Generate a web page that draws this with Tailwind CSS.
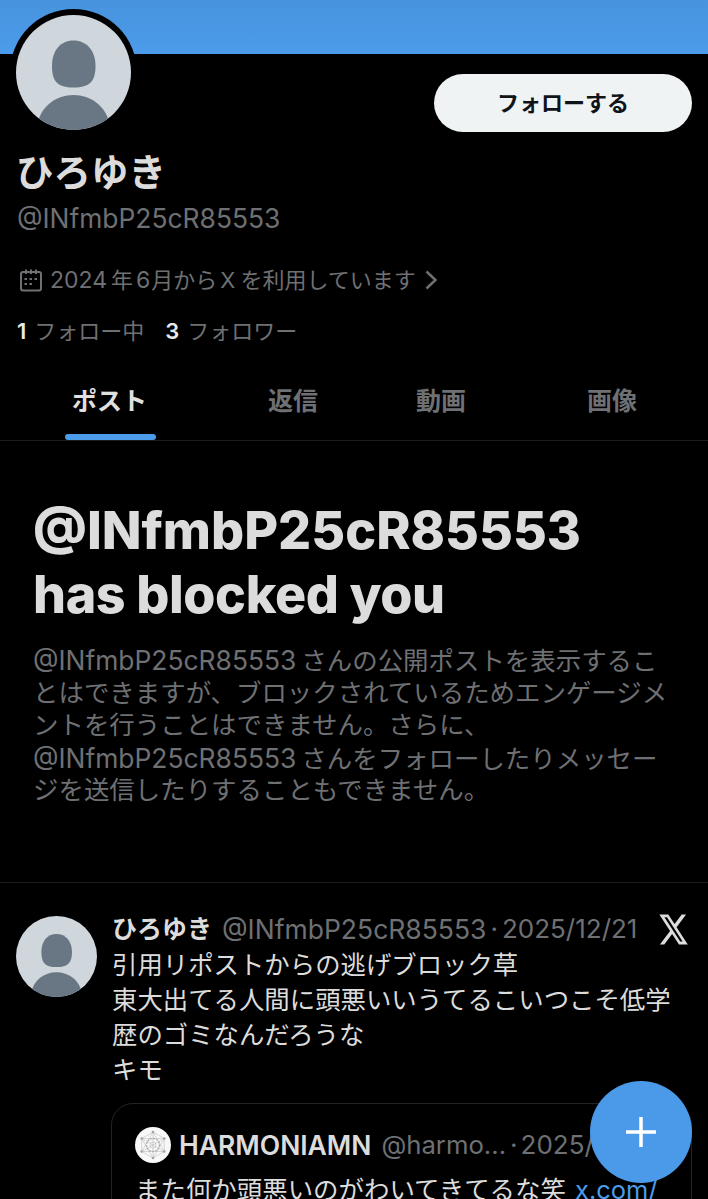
<!DOCTYPE html>
<html lang="ja">
  <head>
    <meta charset="UTF-8" />
    <meta name="viewport" content="width=device-width, initial-scale=1.0" />
    <title>ひろゆき</title>
    <script src="https://cdn.jsdelivr.net/npm/@tailwindcss/browser@4"></script>
  </head>
  <body class="bg-black">
    <div
      class="relative flex h-[1199px] w-[708px] flex-col overflow-hidden bg-black font-['Inter','Noto_Sans_CJK_JP',sans-serif] whitespace-nowrap text-[#dcdcdc]"
    >
      <!-- Banner -->
      <div class="h-[54px] shrink-0 bg-gradient-to-b from-[#4793dd] to-[#4b9ceb]"></div>

      <!-- Profile header -->
      <header class="flex h-[387px] shrink-0 flex-col border-b border-[#1c1c1e]">
        <div class="flex h-[83px] items-start justify-between pr-4 pl-[10px]">
          <div class="-mt-[45px] rounded-full bg-black p-[6px]">
            <svg class="h-[115px] w-[115px] rounded-full" viewBox="0 0 115 115">
              <rect width="115" height="115" fill="#cfd6dc" />
              <path d="M57.500 25.500C71 25.500 79.500 36 79.500 51C79.500 66 74 72.500 57.500 72.500C41 72.500 36 66 36 51C36 36 44 25.500 57.500 25.500Z" fill="#697784" />
              <path d="M21 110C25 91 40 80 57.500 80C75 80 90 91 94 110V115H21Z" fill="#697784" />
            </svg>
          </div>
          <button
            type="button"
            class="mt-5 h-[58px] w-[258px] rounded-full bg-[#eff3f4] text-[22px] leading-[58px] font-bold text-[#0f1419]"
          >
            フォローする
          </button>
        </div>
        <h1 class="mt-[13px] pl-4 text-[37.500px] leading-[45px] font-bold">ひろゆき</h1>
        <p class="pl-[17px] text-[26.400px] leading-[46px] text-[#6e7073]">@INfmbP25cR85553</p>
        <div class="mt-4 flex h-[46px] items-center pl-5 text-[22px] leading-[46px] text-[#6e7073]">
          <svg class="mr-2 h-[23px] w-[22px]" viewBox="0 0 22 23" fill="none" stroke="currentColor">
            <rect x="1" y="3" width="20" height="18.500" rx="2" stroke-width="2" />
            <path d="M6 0.500V5M11 0.500V5M16 0.500V5" stroke-width="2" />
            <path d="M9.500 10h2.500M14.500 10h2.500M4.500 10h2.500M4.500 15h2.500M9.500 15h2.500" stroke-width="2.200" />
          </svg>
          <span class="text-[23px]">2024</span>
          <span class="ml-1">年</span>
          <span class="ml-[3px] text-[23px]">6</span>
          <span class="ml-px">月から</span>
          <span class="ml-[3px] text-[22px]">X</span>
          <span class="ml-[5px]">を利用しています</span>
          <svg class="ml-[9px] h-5 w-3" viewBox="0 0 12 20" fill="none" stroke="currentColor" stroke-width="2.500">
            <path d="M1.500 1.500L10.500 10L1.500 18.500" />
          </svg>
        </div>
        <div class="mt-[5px] flex h-[46px] items-center pl-[17px] text-[22px] leading-[46px] text-[#6e7073]">
          <b class="font-semibold text-[#e7e9ea]">1</b>
          <span class="ml-2">フォロー中</span>
          <b class="ml-[21px] font-semibold text-[#e7e9ea]">3</b>
          <span class="ml-2">フォロワー</span>
        </div>
        <nav class="mt-auto flex h-[79px] text-[25px] leading-[80px] font-bold text-[#6e7073]">
          <div class="relative ml-[65px] w-[91px] text-center">
            <span class="-ml-0.5 text-[#e0e0e0]">ポスト</span>
            <div class="absolute bottom-0 left-0 h-[6px] w-full rounded-full bg-[#4b9ceb]"></div>
          </div>
          <div class="ml-[112px]">返信</div>
          <div class="ml-[98px]">動画</div>
          <div class="ml-[121px]">画像</div>
        </nav>
      </header>

      <!-- Blocked notice -->
      <section class="h-[442px] shrink-0 border-b border-[#1c1c1e] px-[33px] pt-[58px]">
        <h2 class="text-[52px] leading-[63.500px] font-extrabold">
          @INfmbP25cR85553<br /><span class="tracking-[-0.400px]">has blocked you</span>
        </h2>
        <div class="mt-[18px] text-[25.450px] leading-[32.500px] text-[#6e7073]">
          <div class="h-[32.500px]"><span class="text-[26.400px]">@INfmbP25cR85553</span><span class="ml-[5px]">さんの公開ポストを表示するこ</span></div>
          <div class="h-[32.500px]">とはできますが、ブロックされているためエンゲージメ</div>
          <div class="h-[32.500px]">ントを行うことはできません。さらに、</div>
          <div class="h-[32.500px]"><span class="text-[26.400px]">@INfmbP25cR85553</span><span class="ml-[5px]">さんをフォローしたりメッセー</span></div>
          <div class="h-[32.500px]">ジを送信したりすることもできません。</div>
        </div>
      </section>

      <!-- Post -->
      <article class="flex grow pl-4">
        <svg class="mt-[33px] h-[81px] w-[81px] shrink-0 rounded-full" viewBox="0 0 115 115">
          <rect width="115" height="115" fill="#cfd6dc" />
          <path d="M57.500 25.500C71 25.500 79.500 36 79.500 51C79.500 66 74 72.500 57.500 72.500C41 72.500 36 66 36 51C36 36 44 25.500 57.500 25.500Z" fill="#697784" />
          <path d="M21 110C25 91 40 80 57.500 80C75 80 90 91 94 110V115H21Z" fill="#697784" />
        </svg>
        <div class="ml-[14px] w-[581px] pt-7">
          <div class="flex h-[36px] items-center pr-1 pl-px text-[26px] leading-[36px]">
            <span class="text-[25px] font-bold">ひろゆき</span>
            <span class="ml-2.5 text-[26.500px] text-[#6e7073]">@INfmbP25cR85553</span>
            <span class="ml-1 text-[#6e7073]">·</span>
            <span class="ml-1 text-[#6e7073]">2025/12/21</span>
            <svg class="ml-auto h-[31px] w-[29px]" viewBox="1 2 22 20" preserveAspectRatio="none" fill="currentColor">
              <path d="M18.244 2.250h3.308l-7.227 8.260 8.502 11.240H16.170l-5.214-6.817L4.990 21.750H1.680l7.730-8.835L1.254 2.250H8.080l4.713 6.231zm-1.161 17.520h1.833L7.084 4.126H5.117z" />
            </svg>
          </div>
          <div class="pl-px text-[25.400px] leading-[35px]">
            引用リポストからの逃げブロック草<br />
            東大出てる人間に頭悪いいうてるこいつこそ低学<br />
            歴のゴミなんだろうな<br />
            キモ
          </div>

          <!-- Quoted post -->
          <div class="mt-4 h-[160px] rounded-[22px] border border-[#242426] px-[23px] pt-[22px]">
            <div class="flex h-[38px] items-center text-[26px] leading-[38px]">
              <svg class="h-9 w-9 shrink-0" viewBox="0 0 36 36" fill="none" stroke="#b0b0b0" stroke-width="0.500">
                <circle cx="18" cy="18" r="18" fill="#f8f8f8" stroke="none" />
                <path d="M18 5L29.300 24.500H6.700ZM18 31L6.700 11.500H29.300Z" />
                <path d="M18 5L29.300 11.500V24.500L18 31L6.700 24.500V11.500Z" />
                <path d="M18 5V31M6.700 11.500L29.300 24.500M29.300 11.500L6.700 24.500" />
                <circle cx="18" cy="18" r="3" />
                <circle cx="18" cy="18" r="6.500" stroke-width="1.300" stroke-dasharray="2 1" />
                <g fill="#a3a3a3" stroke="none">
                  <circle cx="18" cy="5" r="1.300" />
                  <circle cx="29.300" cy="11.500" r="1.300" />
                  <circle cx="29.300" cy="24.500" r="1.300" />
                  <circle cx="18" cy="31" r="1.300" />
                  <circle cx="6.700" cy="24.500" r="1.300" />
                  <circle cx="6.700" cy="11.500" r="1.300" />
                </g>
              </svg>
              <span class="ml-2 text-[26.500px] font-semibold">HARMONIAMN</span>
              <span class="ml-2.5 text-[25.700px] text-[#6e7073]">@harmo...</span>
              <span class="ml-1 text-[#6e7073]">·</span>
              <span class="ml-[3px] text-[#6e7073]">2025/12/21</span>
            </div>
            <div class="mt-[7px] text-[25.450px] leading-[38px]">
              <span>また何か頭悪いのがわいてきてるな笑</span>
              <span class="ml-0.5 text-[#4b9ceb]">x.com/</span>
            </div>
          </div>
        </div>
      </article>

      <!-- Compose button -->
      <button
        type="button"
        class="absolute top-[1081px] left-[590px] flex h-[102px] w-[102px] items-center justify-center rounded-full bg-[#4b9ae9] text-white"
      >
        <svg class="h-[30px] w-[30px]" viewBox="0 0 30 30" stroke="currentColor" stroke-width="3.500">
          <path d="M15 0V30M0 15H30" />
        </svg>
      </button>
    </div>
  </body>
</html>
